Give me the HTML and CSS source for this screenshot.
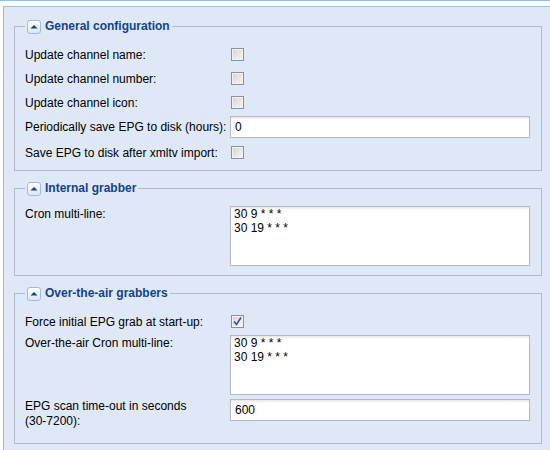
FILE: index.html
```html
<!DOCTYPE html>
<html>
<head>
<meta charset="utf-8">
<title>EPG Grabber configuration</title>
<link rel="stylesheet" href="styles.css">
</head>
<body>
<div class="topbar"></div>
<div class="panel">
  <fieldset class="fs">
    <legend class="fs-legend"><span class="toggle"><svg width="12" height="12" viewBox="0 0 12 12"><polygon points="2.5,7.5 6,4 9.5,7.5" fill="#1d3f86"/></svg></span><span class="fs-title">General configuration</span></legend>
    <div class="row row-check"><label class="lbl">Update channel name:</label><span class="cb"></span></div>
    <div class="row row-check"><label class="lbl">Update channel number:</label><span class="cb"></span></div>
    <div class="row row-check"><label class="lbl">Update channel icon:</label><span class="cb"></span></div>
    <div class="row"><label class="lbl">Periodically save EPG to disk (hours):</label><input class="txt" type="text" value="0"></div>
    <div class="row row-check"><label class="lbl">Save EPG to disk after xmltv import:</label><span class="cb"></span></div>
  </fieldset>

  <fieldset class="fs fs-pad">
    <legend class="fs-legend"><span class="toggle"><svg width="12" height="12" viewBox="0 0 12 12"><polygon points="2.5,7.5 6,4 9.5,7.5" fill="#1d3f86"/></svg></span><span class="fs-title">Internal grabber</span></legend>
    <div class="row"><label class="lbl lbl-top">Cron multi-line:</label><textarea class="ta">30 9 * * *
30 19 * * *</textarea></div>
  </fieldset>

  <fieldset class="fs fs-last">
    <legend class="fs-legend"><span class="toggle"><svg width="12" height="12" viewBox="0 0 12 12"><polygon points="2.5,7.5 6,4 9.5,7.5" fill="#1d3f86"/></svg></span><span class="fs-title">Over-the-air grabbers</span></legend>
    <div class="row row-check"><label class="lbl">Force initial EPG grab at start-up:</label><span class="cb"><svg width="11" height="11" viewBox="0 0 11 11"><polyline points="2,5.5 4.5,8.5 9,1.5" fill="none" stroke="#3b5590" stroke-width="1.6"/></svg></span></div>
    <div class="row"><label class="lbl lbl-top">Over-the-air Cron multi-line:</label><textarea class="ta">30 9 * * *
30 19 * * *</textarea></div>
    <div class="row"><label class="lbl lbl-wrap">EPG scan time-out in seconds <span class="nowrap">(30-7200):</span></label><input class="txt" type="text" value="600"></div>
  </fieldset>
</div>
</body>
</html>
```

FILE: styles.css
```css
html, body {
  margin: 0;
  height: 100%;
}

body {
  display: flex;
  flex-direction: column;
  font-family: "Liberation Sans", Arial, sans-serif;
  font-size: 12px;
  color: #000;
  background: #fff;
  overflow: hidden;
}

.topbar {
  flex: none;
  height: 5px;
  border-top: 1px solid #99bbe8;
  background: #fff;
}

.panel {
  flex: 1;
  margin-left: 3px;
  border-top: 1px solid #99bbe8;
  border-left: 1px solid #99bbe8;
  background: linear-gradient(#e3e6f6, #e3e6f6 7px, #dfe8f6 7px);
  padding-top: 12px;
}

.fs {
  margin: 0 8px 10px 10px;
  padding: 10px 10px 4px 10px;
  border: 1px solid #b5b8c8;
  min-width: 0;
}

.fs-pad {
  padding-bottom: 5px;
}

.fs-last {
  margin-bottom: 0;
}

.fs-legend {
  display: flex;
  align-items: center;
  gap: 4px;
  height: 15px;
  padding: 0 2px;
}

.toggle {
  display: flex;
  align-items: center;
  justify-content: center;
  width: 14px;
  height: 14px;
  box-sizing: border-box;
  border: 1px solid #a2b9e0;
  border-radius: 3px;
  background: linear-gradient(#ffffff, #dbe5f5);
}

.fs-title {
  font-weight: bold;
  color: #15428b;
  line-height: 15px;
}

.row {
  display: flex;
  align-items: flex-start;
  margin-bottom: 4px;
}

.row-check {
  height: 20px;
}

.lbl {
  flex: none;
  width: 205px;
  padding-top: 3px;
  line-height: 16px;
  white-space: nowrap;
}

.lbl-top {
  padding-top: 0;
}

.lbl-wrap {
  width: 195px;
  padding: 0 10px 6px 0;
  line-height: 15px;
  white-space: normal;
}

.nowrap {
  white-space: nowrap;
}

.cb {
  display: flex;
  align-items: center;
  justify-content: center;
  width: 13px;
  height: 13px;
  margin: 4px 0 0 1px;
  box-sizing: border-box;
  border: 1px solid #909292;
  box-shadow: inset 0 0 0 1px #f2f2f2;
  background: linear-gradient(135deg, #d2d2d2, #f8f8f8);
}

.txt {
  width: 300px;
  height: 22px;
  box-sizing: border-box;
  margin: 0;
  padding: 0 4px;
  border: 1px solid #b5b8c8;
  background: linear-gradient(#e6e6e6, #ffffff 3px);
  font: inherit;
  line-height: 20px;
  color: #000;
  outline: none;
}

.ta {
  display: block;
  width: 300px;
  height: 60px;
  box-sizing: border-box;
  margin: 0;
  padding: 0 3px;
  border: 1px solid #b5b8c8;
  background: linear-gradient(#e6e6e6, #ffffff 3px);
  font: inherit;
  line-height: 14px;
  color: #000;
  resize: none;
  overflow: hidden;
  outline: none;
}
```
